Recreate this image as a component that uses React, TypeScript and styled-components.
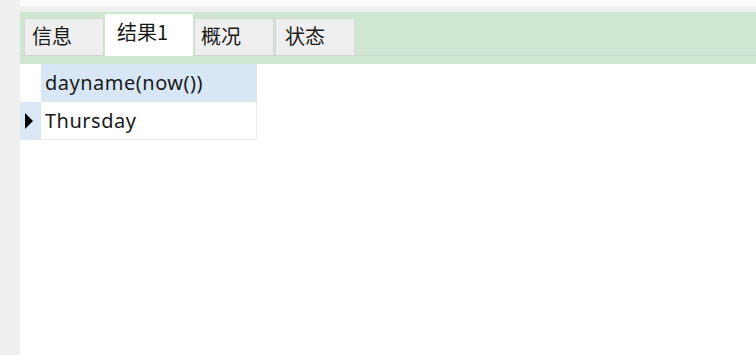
import styled, { createGlobalStyle } from "styled-components";

const GlobalStyle = createGlobalStyle`
  html, body {
    margin: 0;
    padding: 0;
    background: #ffffff;
  }
  body {
    font-family: "Noto Sans", "Noto Sans CJK SC", sans-serif;
  }
`;

interface TabProps {
  label: string;
  width: number;
  pad: number;
  active?: boolean;
}

const tabs: TabProps[] = [
  { label: "信息", width: 80, pad: 7 },
  { label: "结果1", width: 88, pad: 11 },
  { label: "概况", width: 80, pad: 6 },
  { label: "状态", width: 80, pad: 9 },
];
tabs[1].active = true;

const Tab = ({ label, width, pad, active }: TabProps) => (
  <TabButton $active={active} style={{ width, paddingLeft: pad }}>
    {label}
  </TabButton>
);

const App = () => {
  return (
    <>
      <GlobalStyle />
      <Page>
        <Gutter />
        <Main>
          <TopStrip />
          <Separator />
          <TabBand>
            <TabRow>
              {tabs.map((t) => (
                <Tab key={t.label} {...t} />
              ))}
            </TabRow>
          </TabBand>
          <Grid>
            <Corner />
            <HeaderCell>dayname(now())</HeaderCell>
            <RowMarker>
              <Arrow />
            </RowMarker>
            <DataCell>Thursday</DataCell>
          </Grid>
        </Main>
      </Page>
    </>
  );
};

const Page = styled.div`
  display: flex;
  width: 756px;
  height: 355px;
  overflow: hidden;
  background: #ffffff;
`;

const Gutter = styled.div`
  width: 20px;
  flex: none;
  background: #efefef;
`;

const Main = styled.div`
  flex: 1;
  display: flex;
  flex-direction: column;
`;

const TopStrip = styled.div`
  height: 6px;
  background: #fbfbfb;
`;

const Separator = styled.div`
  height: 6px;
  background: #efefef;
`;

const TabBand = styled.div`
  height: 52px;
  background: #cde7d0;
`;

const TabRow = styled.div`
  display: flex;
  align-items: flex-end;
  height: 42px;
  padding: 1px 0 0 4px;
  border-bottom: 1px solid #d3d3d3;
`;

const TabButton = styled.div<{ $active?: boolean }>`
  box-sizing: border-box;
  display: flex;
  align-items: center;
  height: ${(p) => (p.$active ? "42px" : "37px")};
  margin-bottom: ${(p) => (p.$active ? "-1px" : "0")};
  padding-bottom: ${(p) => (p.$active ? "9px" : "3px")};
  background: ${(p) => (p.$active ? "#ffffff" : "#efefef")};
  border: 1px solid ${(p) => (p.$active ? "#ffffff" : "#d6d6d6")};
  border-bottom: none;
  font-family: "Noto Sans CJK SC", sans-serif;
  font-size: 20px;
  color: #1a1a1a;
  margin-right: 1px;
`;

const Grid = styled.div`
  display: grid;
  grid-template-columns: 21px 216px;
  grid-template-rows: 38px 38px;
`;

const Corner = styled.div`
  background: #ffffff;
`;

const Cell = styled.div`
  box-sizing: border-box;
  display: flex;
  align-items: center;
  padding-left: 4px;
  font-size: 20px;
  letter-spacing: 0.5px;
  color: #1a1a1a;
`;

const HeaderCell = styled(Cell)`
  padding-bottom: 1px;
  background: #d8e7f6;
  border-right: 1px solid #e2e2e2;
  border-bottom: 1px solid #e2e2e2;
`;

const DataCell = styled(Cell)`
  background: #ffffff;
  border-right: 1px solid #ececec;
  border-bottom: 1px solid #ececec;
`;

const RowMarker = styled.div`
  display: flex;
  align-items: center;
  padding-left: 5px;
  background: #dae8f6;
`;

const Arrow = styled.div`
  width: 0;
  height: 0;
  border-top: 8px solid transparent;
  border-bottom: 8px solid transparent;
  border-left: 8px solid #000000;
`;

export default App;
